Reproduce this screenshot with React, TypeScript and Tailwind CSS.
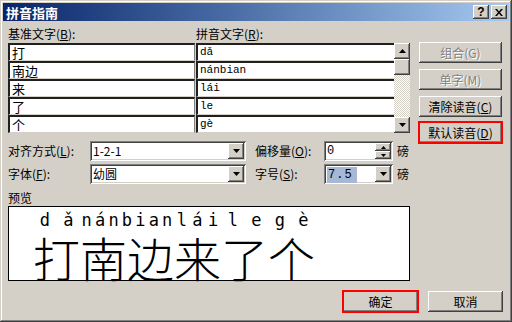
import React from 'react';

// Win classic bevels
const raised =
  'bg-[#d4d0c8] shadow-[inset_-1px_-1px_0_#404040,inset_1px_1px_0_#ffffff,inset_-2px_-2px_0_#808080,inset_2px_2px_0_#d4d0c8]';
const sunken =
  'bg-white shadow-[inset_1px_1px_0_#808080,inset_-1px_-1px_0_#ffffff,inset_2px_2px_0_#404040,inset_-2px_-2px_0_#d4d0c8]';

const rows = [
  { base: '打', py: 'dǎ' },
  { base: '南边', py: 'nánbian' },
  { base: '来', py: 'lái' },
  { base: '了', py: 'le' },
  { base: '个', py: 'gè' },
];

const Arrow = ({ up = false }: { up?: boolean }) => (
  <svg width="7" height="4" viewBox="0 0 7 4">
    <path d={up ? 'M3.5 0L7 4H0z' : 'M0 0h7L3.5 4z'} fill="#000" />
  </svg>
);

const DropBtn = () => (
  <div className={`${raised} w-[16px] h-[16px] flex items-center justify-center`}>
    <Arrow />
  </div>
);

const Combo = ({ value, width, selected = false }: { value: string; width: string; selected?: boolean }) => (
  <div className={`${sunken} ${width} h-[20px] flex items-center pl-[3px] pr-[2px]`}>
    <div className="flex-1 text-[12px] leading-none">
      {selected ? (
        <span className="bg-[#a6b8d6] pl-[1px] pr-[4px] py-[1px] font-['Liberation_Mono',monospace] text-[12px] tracking-[1px]">7.5</span>
      ) : (
        value
      )}
    </div>
    <DropBtn />
  </div>
);

const Btn = ({
  children,
  disabled = false,
  marked = false,
  className = '',
}: {
  children: React.ReactNode;
  disabled?: boolean;
  marked?: boolean;
  className?: string;
}) => (
  <div className={`${raised} relative h-[21px] flex items-center justify-center text-[12px] ${className}`}>
    <span className={disabled ? 'text-[#808080] [text-shadow:1px_1px_0_#ffffff]' : 'text-black'}>{children}</span>
    {marked && <span className="absolute -inset-[1px] border-2 border-[#ff0000]" />}
  </div>
);

const preview = [
  { py: 'dǎ', hz: '打' },
  { py: 'nánbian', hz: '南边' },
  { py: 'lái', hz: '来' },
  { py: 'le', hz: '了' },
  { py: 'gè', hz: '个' },
];

export default function App() {
  return (
    <div className="w-[512px] h-[322px] bg-[#d4d0c8] p-[3px] flex flex-col font-['Noto_Sans_CJK_SC',sans-serif] text-[12px] text-black shadow-[inset_-1px_-1px_0_#404040,inset_1px_1px_0_#d4d0c8,inset_-2px_-2px_0_#808080,inset_2px_2px_0_#ffffff] overflow-hidden">
      {/* title bar */}
      <div className="h-[18px] bg-gradient-to-r from-[#0a246a] to-[#a6caf0] flex items-center pl-[3px] pr-[2px]">
        <span className="flex-1 text-white font-bold text-[13px] leading-none">拼音指南</span>
        <div className={`${raised} w-[16px] h-[14px] flex items-center justify-center font-bold text-[12px] leading-none font-['Liberation_Sans',sans-serif]`}>?</div>
        <div className={`${raised} w-[16px] h-[14px] ml-[2px] flex items-center justify-center`}>
          <svg width="8" height="7" viewBox="0 0 8 7">
            <path d="M0 0h2l2 2.5L6 0h2L5 3.5 8 7H6L4 4.5 2 7H0l3-3.5z" fill="#000" />
          </svg>
        </div>
      </div>

      <div className="flex pl-[5px] pt-[5px]">
        {/* left side */}
        <div className="w-[402px] flex flex-col">
          <div className="h-[16px] flex items-center">
            <span className="w-[188px]">基准文字(<u>B</u>):</span>
            <span>拼音文字(<u>R</u>):</span>
          </div>

          <div className="flex h-[91px] pt-[1px]">
            <div className="flex flex-col">
              {rows.map((r) => (
                <div key={r.base} className="flex h-[18px]">
                  <div className="w-[187px] bg-white border-t-2 border-l-2 border-[#202020] border-r border-r-[#808080] border-b border-b-[#d4d0c8] pl-[2px] leading-[15px] text-[13px]">
                    {r.base}
                  </div>
                  <div className="w-[198px] ml-[1px] bg-white border-t-2 border-l-2 border-[#202020] border-b border-b-[#d4d0c8] pl-[2px] leading-[15px] font-['Liberation_Mono',monospace] text-[11px]">
                    {r.py}
                  </div>
                </div>
              ))}
            </div>
            <div className="w-[16px] flex flex-col">
              <div className={`${raised} h-[16px] flex items-center justify-center`}>
                <Arrow up />
              </div>
              <div className={`${raised} h-[16px]`} />
              <div className="flex-1 bg-[repeating-conic-gradient(#d4d0c8_0_25%,#ffffff_0_50%)] bg-[length:2px_2px]" />
              <div className={`${raised} h-[16px] flex items-center justify-center`}>
                <Arrow />
              </div>
            </div>
          </div>

          {/* options */}
          <div className="flex items-center mt-[8px] h-[20px]">
            <span className="w-[82px]">对齐方式(<u>L</u>):</span>
            <Combo value="1-2-1" width="w-[156px]" />
            <span className="w-[78px] pl-[9px]">偏移量(<u>O</u>):</span>
            <div className={`${sunken} w-[69px] h-[20px] flex items-center pl-[3px] pr-[2px]`}>
              <span className="flex-1 font-['Liberation_Mono',monospace] text-[12px]">0</span>
              <div className="flex flex-col">
                <div className={`${raised} w-[16px] h-[8px] flex items-center justify-center`}>
                  <svg width="5" height="3" viewBox="0 0 5 3"><path d="M2.5 0L5 3H0z" fill="#000" /></svg>
                </div>
                <div className={`${raised} w-[16px] h-[8px] flex items-center justify-center`}>
                  <svg width="5" height="3" viewBox="0 0 5 3"><path d="M0 0h5L2.5 3z" fill="#000" /></svg>
                </div>
              </div>
            </div>
            <span className="ml-[4px]">磅</span>
          </div>
          <div className="flex items-center mt-[3px] h-[20px]">
            <span className="w-[82px]">字体(<u>F</u>):</span>
            <Combo value="幼圆" width="w-[156px]" />
            <span className="w-[78px] pl-[9px]">字号(<u>S</u>):</span>
            <Combo value="7.5" width="w-[69px]" selected />
            <span className="ml-[4px]">磅</span>
          </div>

          <div className="mt-[5px] h-[17px] flex items-center">预览</div>
          <div className="h-[75px] bg-white border border-black pl-[24px] flex">
            {preview.map((p) => (
              <div key={p.hz} className="flex flex-col" style={{ width: p.hz.length * 47 }}>
                <div className="flex justify-around h-[27px] items-end pb-[4px] font-['DejaVu_Sans_Mono',monospace] text-[17px]">
                  {p.py.split('').map((c, i) => (
                    <span key={i} className="block h-[17px] leading-[17px]">{c}</span>
                  ))}
                </div>
                <div className="flex text-[47px] font-light font-['Noto_Sans_CJK_SC',sans-serif]">
                  {p.hz.split('').map((c, i) => (
                    <span key={i} className="block w-[47px] h-[47px] leading-[47px] text-center">{c}</span>
                  ))}
                </div>
              </div>
            ))}
          </div>
        </div>

        {/* right buttons */}
        <div className="ml-[9px] w-[83px] flex flex-col pt-[16px]">
          <Btn disabled>组合(G)</Btn>
          <Btn disabled className="mt-[6px]">单字(M)</Btn>
          <Btn className="mt-[6px]">清除读音(<u>C</u>)</Btn>
          <Btn marked className="mt-[5px]">默认读音(<u>D</u>)</Btn>
        </div>
      </div>

      <div className="flex justify-end gap-[10px] pr-[6px] mt-[10px]">
        <Btn marked className="w-[75px]">确定</Btn>
        <Btn className="w-[75px]">取消</Btn>
      </div>
    </div>
  );
}
